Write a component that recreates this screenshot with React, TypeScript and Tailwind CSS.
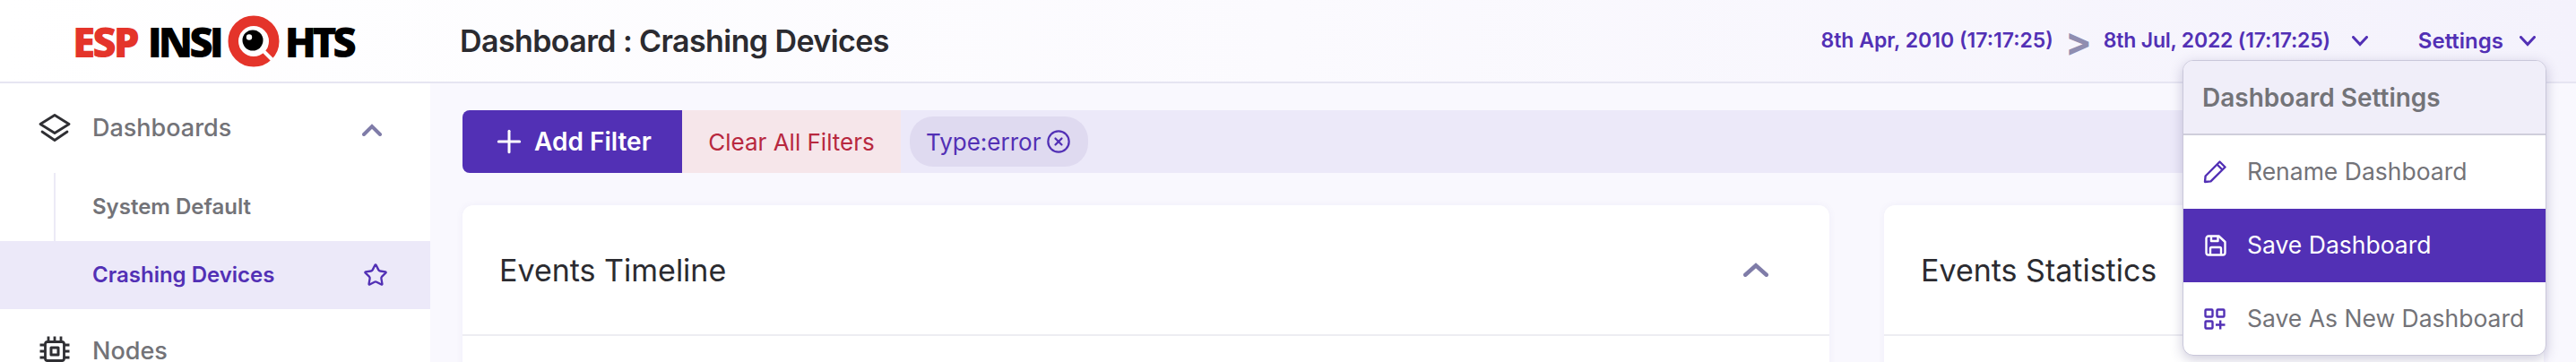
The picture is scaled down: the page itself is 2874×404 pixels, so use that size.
import React from "react";
import { CircleX, Plus, Star } from "lucide-react";

const Chevron = ({ up, w, h, sw, className }: { up?: boolean; w: number; h: number; sw: number; className?: string }) => (
  <svg width={w} height={h} viewBox={`0 0 ${w} ${h}`} fill="none" stroke="currentColor" strokeWidth={sw} strokeLinecap="round" strokeLinejoin="miter" className={className}>
    {up ? (
      <path d={`M${sw / 2} ${h - sw / 2} L${w / 2} ${sw / 2 + 1} L${w - sw / 2} ${h - sw / 2}`} />
    ) : (
      <path d={`M${sw / 2} ${sw / 2} L${w / 2} ${h - sw / 2 - 1} L${w - sw / 2} ${sw / 2}`} />
    )}
  </svg>
);

const LayersIcon = () => (
  <svg width="36" height="32" viewBox="0 0 36 32" fill="none" stroke="#2f2f33" strokeWidth="2.8" strokeLinejoin="round" strokeLinecap="round">
    <path d="M18 1.5 L34 11.5 L18 21.5 L2 11.5 Z" />
    <path d="M4 20 L18 29.5 L32 20" />
  </svg>
);

const ChipIcon = () => (
  <svg width="34" height="34" viewBox="0 0 34 34" fill="none" stroke="#2f2f33" strokeWidth="2.8" strokeLinejoin="round">
    <rect x="6.5" y="6.5" width="21" height="21" rx="2.5" />
    <rect x="13" y="13" width="8" height="8" strokeWidth="3" />
    <path d="M10 0.5 V6 M17 0.5 V6 M24 0.5 V6 M10 28 V33.5 M17 28 V33.5 M24 28 V33.5" />
    <path d="M0.5 10 H6 M0.5 17 H6 M0.5 24 H6 M28 10 H33.5 M28 17 H33.5 M28 24 H33.5" />
  </svg>
);

const PencilIcon = () => (
  <svg width="26" height="26" viewBox="0 0 26 26" fill="none" stroke="#5230b5" strokeWidth="2.4" strokeLinejoin="round">
    <path d="M2 24 L2.6 17.5 L18.5 1.5 L24.5 7.5 L8.5 23.4 Z" />
    <path d="M15.5 4.5 L21.5 10.5" />
  </svg>
);

const SaveIcon = () => (
  <svg width="24" height="24" viewBox="0 0 24 24" fill="none" stroke="#fff" strokeWidth="2.4" strokeLinejoin="round">
    <path d="M4 1.5 H15.5 L22.5 8 V20 A2.5 2.5 0 0 1 20 22.5 H4 A2.5 2.5 0 0 1 1.5 20 V4 A2.5 2.5 0 0 1 4 1.5 Z" />
    <path d="M7 1.5 V7 H14.5 V1.5" />
    <path d="M6 22.5 V15.5 A1.5 1.5 0 0 1 7.5 14 H16.5 A1.5 1.5 0 0 1 18 15.5 V22.5" />
  </svg>
);

const GridPlusIcon = () => (
  <svg width="24" height="24" viewBox="0 0 24 24" fill="none" stroke="#5230b5" strokeWidth="2.4">
    <rect x="1.5" y="1.5" width="8" height="8" rx="1" />
    <rect x="14.5" y="1.5" width="8" height="8" rx="1" />
    <rect x="1.5" y="14.5" width="8" height="8" rx="1" />
    <path d="M18.2 13.5 V23.5 M13 18.5 H23.5" />
  </svg>
);

// logo mark: red ring with a black eye and a small magnifier handle
const LogoMark = () => (
  <svg width="58" height="58" viewBox="0 0 58 58" className="ml-[8px] mr-[6px] shrink-0">
    <circle cx="29" cy="29" r="22.75" fill="none" stroke="#e4342a" strokeWidth="11.5" />
    <circle cx="28" cy="28" r="11.5" fill="#000" />
    <circle cx="24" cy="24.5" r="3.2" fill="#fff" />
    <path d="M40 40 L49.5 49.5" stroke="#fff" strokeWidth="4" />
  </svg>
);

const Logo = () => (
  <div className="w-[480px] h-full flex items-center pl-[81px] font-['Open_Sans',sans-serif] font-extrabold text-[46px] leading-none text-black">
    <span className="text-[#e4342a] mr-[12px] tracking-[-3px]">ESP</span>
    <span className="tracking-[-4px]">INSI</span>
    <LogoMark />
    <span className="tracking-[-4.5px]">HTS</span>
  </div>
);

const Header = () => (
  <div className="h-[93px] shrink-0 flex items-center border-b-2 border-[#e6e5f2] bg-gradient-to-r from-white via-[#fbfafe] to-[#f4f2fc]">
    <Logo />
    <div className="pl-[33px] text-[34px] font-semibold tracking-[-0.6px] text-[#2b2b30]">Dashboard : Crashing Devices</div>
    <div className="ml-auto flex items-center pr-[45px] text-[23px] font-semibold text-[#5230b5]">
      <span>8th Apr, 2010 (17:17:25)</span>
      <span className="mx-[13px] text-[44px] leading-none font-bold text-[#8f8db0]">&gt;</span>
      <span className="tracking-[-0.2px]">8th Jul, 2022 (17:17:25)</span>
      <Chevron w={18} h={12} sw={3} className="ml-[24px]" />
      <span className="ml-[56px] text-[24px]">Settings</span>
      <Chevron w={18} h={12} sw={3} className="ml-[18px]" />
    </div>
  </div>
);

const Sidebar = () => (
  <div className="w-[480px] shrink-0 bg-white flex flex-col text-[#737378] font-medium">
    <div className="h-[100px] shrink-0 flex items-center pl-[43px] pr-[54px] text-[27px]">
      <div className="w-[60px]"><LayersIcon /></div>
      <span>Dashboards</span>
      <Chevron up w={22} h={14} sw={4} className="ml-auto mt-[4px] text-[#7f7ca8]" />
    </div>
    <div className="h-[76px] shrink-0 ml-[60px] border-l-2 border-[#eceaf6] flex items-center pl-[41px] text-[24px] font-semibold">System Default</div>
    <div className="h-[76px] shrink-0 bg-[#ece9f9] flex items-center pl-[103px] pr-[47px] text-[24px] font-semibold text-[#5230b5]">
      <span>Crashing Devices</span>
      <Star size={28} strokeWidth={2} className="ml-auto" />
    </div>
    <div className="h-[94px] shrink-0 flex items-center pl-[44px] text-[27px]">
      <div className="w-[59px]"><ChipIcon /></div>
      <span>Nodes</span>
    </div>
  </div>
);

const FilterBar = () => (
  <div className="h-[70px] flex items-center bg-[#ece9f9] rounded-l-lg text-[26px]">
    <button className="w-[245px] h-full flex items-center pl-[32px] gap-[8px] bg-[#5230b5] text-white text-[28px] font-semibold rounded-l-lg">
      <Plus size={40} strokeWidth={1.8} />
      Add Filter
    </button>
    <button className="w-[244px] h-full flex items-center justify-center bg-[#f6e6ea] text-[#b8283f]">Clear All Filters</button>
    <div className="ml-[10px] h-[56px] w-[199px] flex items-center pl-[18px] gap-[6px] rounded-[26px] bg-[#dfdaf0] text-[#5230b5]">
      Type:error
      <CircleX size={28} strokeWidth={1.9} />
    </div>
  </div>
);

const Card = ({ title, className, collapse }: { title: string; className: string; collapse?: boolean }) => (
  <div className={`bg-white rounded-t-xl shadow-[0_0_8px_rgba(80,70,160,0.06)] ${className}`}>
    <div className="h-[146px] flex items-center pl-[41px] pr-[68px] border-b-2 border-[#ededf2] text-[34px] text-[#2b2b30]">
      <span>{title}</span>
      {collapse && <Chevron up w={28} h={16} sw={4.5} className="ml-auto text-[#7f7ca8]" />}
    </div>
  </div>
);

const SettingsMenu = () => (
  <div className="absolute left-[2435px] top-[67px] w-[406px] h-[330px] rounded-xl overflow-hidden border border-[#c9c7da] bg-white shadow-[0_4px_14px_rgba(60,50,110,0.25)] text-[26.5px] text-[#737378]">
    <div className="h-[83px] flex items-center pl-[21px] border-b-2 border-[#cfcedb] bg-[#f0eef9] text-[28px] font-semibold">Dashboard Settings</div>
    <div className="h-[82px] flex items-center pl-[22px]">
      <span className="mr-[23px]"><PencilIcon /></span>
      Rename Dashboard
    </div>
    <div className="h-[82px] flex items-center pl-[24px] bg-[#5230b5] text-white">
      <span className="mr-[23px]"><SaveIcon /></span>
      Save Dashboard
    </div>
    <div className="h-[82px] flex items-center pl-[23px]">
      <span className="mr-[24px]"><GridPlusIcon /></span>
      Save As New Dashboard
    </div>
  </div>
);

export default function App() {
  return (
    <div className="relative w-[2874px] h-[404px] overflow-hidden flex flex-col bg-[#f9f8fe] font-['Inter',sans-serif]">
      <Header />
      <div className="flex flex-1 min-h-0">
        <Sidebar />
        <div className="flex-1 pl-[36px] pt-[30px] pr-[36px]">
          <FilterBar />
          <div className="flex gap-[61px] mt-[36px] h-[400px]">
            <Card title="Events Timeline" className="w-[1525px]" collapse />
            <Card title="Events Statistics" className="flex-1" />
          </div>
        </div>
      </div>
      <SettingsMenu />
    </div>
  );
}
